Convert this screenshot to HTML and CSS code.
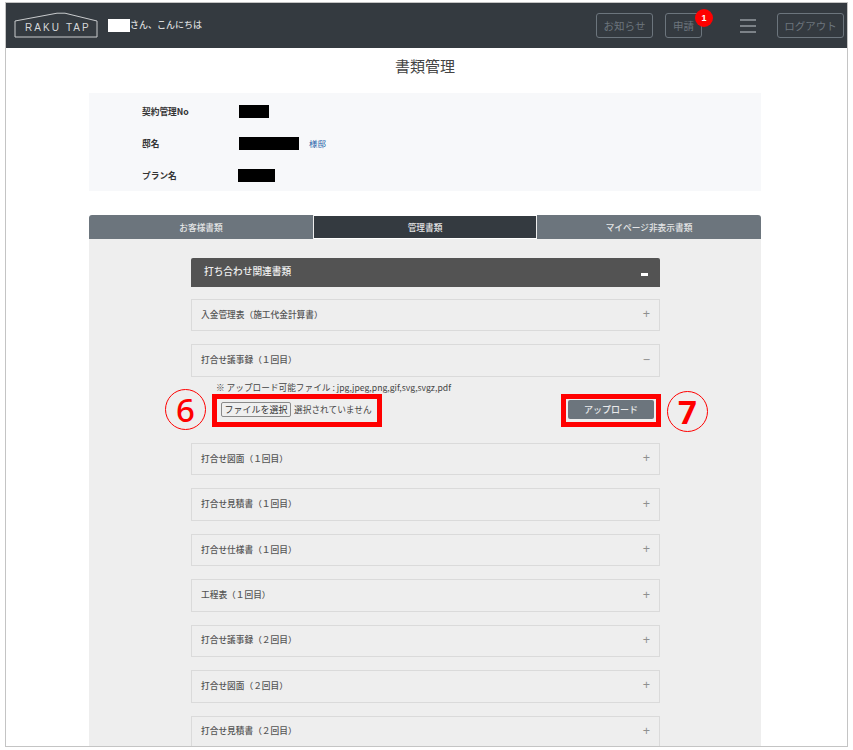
FILE: index.html
```html
<!DOCTYPE html>
<html lang="ja">
<head>
<meta charset="utf-8">
<title>書類管理</title>
<link rel="stylesheet" href="styles.css">
</head>
<body>
<div class="frame">
  <header class="topbar">
    <svg class="logo" width="84" height="26" viewBox="0 0 84 26" aria-label="RAKU TAP">
      <path d="M1 25V9L43 1.2 51 1.2 83 9V25Z" fill="none" stroke="#c9cbcd" stroke-width="1"/>
      <text x="11" y="19" class="logo-text">RAKU TAP</text>
    </svg>
    <span class="masked-name"></span><span class="greeting">さん、こんにちは</span>
    <nav class="nav">
      <a class="nav-btn">お知らせ</a>
      <a class="nav-btn nav-btn-apply">申請<span class="badge">1</span></a>
      <span class="burger"><i></i><i></i><i></i></span>
      <a class="nav-btn nav-btn-logout">ログアウト</a>
    </nav>
  </header>

  <main class="content">
    <h1 class="title">書類管理</h1>

    <section class="info">
      <div class="info-row"><span class="info-label">契約管理No</span><span class="redact redact-no"></span></div>
      <div class="info-row"><span class="info-label">邸名</span><span class="redact redact-name"></span><span class="suffix">様邸</span></div>
      <div class="info-row"><span class="info-label">プラン名</span><span class="redact redact-plan"></span></div>
    </section>

    <div class="tabs">
      <a class="tab">お客様書類</a>
      <a class="tab tab-active">管理書類</a>
      <a class="tab">マイページ非表示書類</a>
    </div>

    <section class="panel">
      <div class="group-head"><span>打ち合わせ関連書類</span><span class="group-minus"></span></div>

      <div class="item"><span>入金管理表（施工代金計算書）</span><span class="sign">+</span></div>
      <div class="item"><span>打合せ議事録（１回目）</span><span class="sign">−</span></div>

      <div class="upload">
        <p class="upload-note">※ アップロード可能ファイル : jpg,jpeg,png,gif,svg,svgz,pdf</p>
        <div class="upload-row">
          <div class="file-field"><span class="file-btn">ファイルを選択</span><span class="file-state">選択されていません</span></div>
          <span class="upload-btn">アップロード</span>
        </div>
        <span class="mark mark-file"></span>
        <span class="mark mark-btn"></span>
        <span class="num num-6">6</span>
        <span class="num num-7">7</span>
      </div>

      <div class="item"><span>打合せ図面（１回目）</span><span class="sign">+</span></div>
      <div class="item"><span>打合せ見積書（１回目）</span><span class="sign">+</span></div>
      <div class="item"><span>打合せ仕様書（１回目）</span><span class="sign">+</span></div>
      <div class="item"><span>工程表（１回目）</span><span class="sign">+</span></div>
      <div class="item"><span>打合せ議事録（２回目）</span><span class="sign">+</span></div>
      <div class="item"><span>打合せ図面（２回目）</span><span class="sign">+</span></div>
      <div class="item"><span>打合せ見積書（２回目）</span><span class="sign">+</span></div>
    </section>
  </main>
</div>
</body>
</html>
```
FILE: styles.css
```css
* { box-sizing: border-box; }
html, body { margin: 0; padding: 0; background: #fff; }
body {
  font-family: "Noto Sans CJK JP", "Noto Sans", "Liberation Sans", sans-serif;
  height: 750px;
  overflow: hidden;
}
.frame {
  margin: 2px 0 0 5px;
  width: 843px;
  height: 745px;
  border: 1px solid #c4c4c4;
  overflow: hidden;
  background: #fff;
}

/* top bar */
.topbar {
  display: flex;
  align-items: center;
  height: 45px;
  background: #343a40;
  padding: 0 3px 0 8px;
}
.logo { flex: none; display: block; margin-top: -1px; }
.logo-text {
  font-family: "Liberation Sans", sans-serif;
  font-size: 10px;
  letter-spacing: 2.1px;
  fill: #d6d7d9;
}
.masked-name {
  width: 22px;
  height: 13px;
  background: #fff;
  margin-left: 10px;
  margin-top: -1px;
}
.greeting {
  color: #d9dadb;
  font-size: 9px;
  font-weight: 500;
  margin-top: -3px;
}
.nav { margin-left: auto; display: flex; align-items: center; }
.nav-btn {
  position: relative;
  display: flex;
  align-items: center;
  justify-content: center;
  height: 25px;
  width: 57px;
  border: 1px solid #6c757d;
  border-radius: 3px;
  color: #6c757d;
  font-size: 10.5px;
}
.nav-btn-apply { width: 37px; margin-left: 12px; }
.nav-btn-logout { width: 67px; margin-left: 21px; }
.badge {
  position: absolute;
  right: -12px;
  top: -5px;
  width: 18px;
  height: 18px;
  border-radius: 50%;
  background: #f00;
  color: #fff;
  font-family: "Liberation Sans", sans-serif;
  font-size: 9px;
  font-weight: 700;
  display: flex;
  align-items: center;
  justify-content: center;
}
.burger {
  display: flex;
  flex-direction: column;
  gap: 4px;
  width: 16px;
  margin-left: 38px;
}
.burger i { display: block; height: 2px; background: #7c8288; }

/* content */
.content { padding: 0 86px 0 83px; }
.title {
  margin: 0;
  height: 45px;
  padding-top: 7px;
  text-align: center;
  font-size: 15px;
  line-height: 22px;
  font-weight: 400;
  color: #444;
}
.info {
  height: 98px;
  background: #f7f8fa;
  padding: 2px 0 0 53px;
  display: flex;
  flex-direction: column;
}
.info-row { height: 32px; display: flex; align-items: center; }
.info-label {
  width: 97px;
  font-size: 8.7px;
  font-weight: 700;
  color: #333;
}
.redact { display: block; background: #000; height: 13px; }
.redact-no { width: 30px; }
.redact-name { width: 60px; }
.redact-plan { width: 37px; margin-left: -1px; }
.suffix { margin-left: 10px; font-size: 8.5px; color: #1b5fa8; }

.tabs {
  display: grid;
  grid-template-columns: 225px 223px 224px;
  margin-top: 24px;
  height: 24px;
}
.tab {
  display: flex;
  align-items: center;
  justify-content: center;
  background: #6c757d;
  color: #e4e5e6;
  font-size: 8.7px;
  font-weight: 500;
  border-right: 1px solid #eee;
}
.tab:first-child { border-top-left-radius: 3px; }
.tab:last-child { border-top-right-radius: 3px; border-right: 0; }
.tab-active { background: #343a40; margin-top: 1px; margin-bottom: 1px; }

.panel {
  background: #eee;
  padding: 19px 101px 40px 102px;
  height: 520px;
}
.group-head {
  display: flex;
  align-items: center;
  justify-content: space-between;
  height: 29px;
  padding: 0 12px 4px 13px;
  background: #535353;
  color: #eee;
  font-size: 9.7px;
  font-weight: 500;
  border-radius: 2px 2px 0 0;
  margin-bottom: 12px;
}
.group-minus { width: 7px; height: 3px; background: #fff; margin-top: 8px; }
.item {
  display: flex;
  align-items: center;
  justify-content: space-between;
  height: 32.45px;
  margin-bottom: 13px;
  padding: 0 9px 2px 9px;
  border: 1px solid #dadada;
  background: #eee;
  font-size: 8.7px;
  font-weight: 500;
  color: #555;
}
.item:nth-of-type(3) { margin-bottom: 0; }
.sign {
  font-size: 12.5px;
  line-height: 12px;
  color: #8f8f8f;
  font-family: "Liberation Sans", sans-serif;
}

.upload {
  position: relative;
  height: 66.1px;
  padding-top: 4px;
}
.upload-note {
  margin: 0 0 0 25px;
  font-size: 8.66px;
  line-height: 12px;
  color: #444;
}
.upload-row {
  display: flex;
  align-items: center;
  justify-content: space-between;
  margin-top: 7px;
  padding: 0 6px 0 30px;
}
.file-field { display: flex; align-items: center; margin-top: 1px; }
.file-btn {
  width: 70px;
  height: 15px;
  display: flex;
  align-items: center;
  justify-content: center;
  background: #efefef;
  border: 1px solid #8a8a8a;
  border-radius: 2px;
  font-size: 9px;
  color: #333;
}
.file-state { margin-left: 3px; font-size: 8.7px; color: #444; }
.upload-btn {
  width: 86px;
  height: 19px;
  display: flex;
  align-items: center;
  justify-content: center;
  background: #6c757d;
  border-radius: 2px;
  color: #e8e9ea;
  font-size: 9px;
  font-weight: 500;
}
.mark {
  position: absolute;
  top: 17px;
  height: 33px;
  border: 5px solid #f00;
}
.mark-file { left: 21px; width: 170px; }
.mark-btn { left: 370px; width: 100px; }
.num {
  position: absolute;
  width: 41px;
  height: 41px;
  border: 1px solid #f00;
  border-radius: 50%;
  color: #f00;
  display: flex;
  align-items: center;
  justify-content: center;
  font-family: "Noto Sans", sans-serif;
  font-size: 33px;
  line-height: 1;
}
.num-6 { left: -26px; top: 12px; font-weight: 500; }
.num-7 { left: 476px; top: 14px; font-weight: 700; }
```
